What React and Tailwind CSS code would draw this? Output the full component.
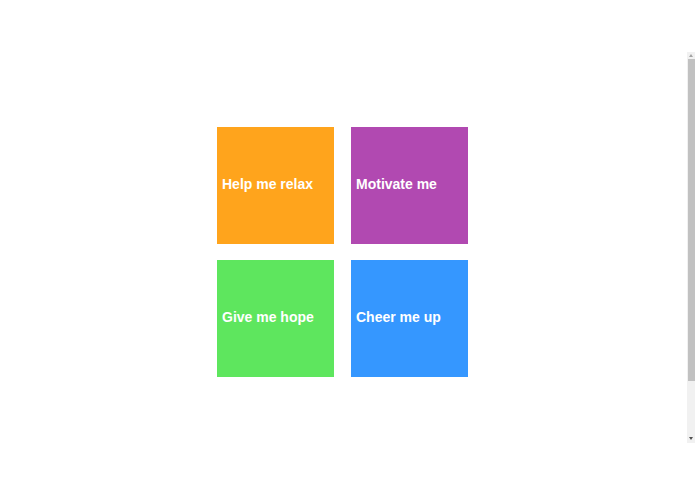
import React from "react"

const tiles = [
  { label: "Help me relax", color: "bg-[#ffa41c]" },
  { label: "Motivate me", color: "bg-[#b149b1]" },
  { label: "Give me hope", color: "bg-[#5ee65e]" },
  { label: "Cheer me up", color: "bg-[#3597ff]" },
]

function Scrollbar() {
  // fake thin scrollbar sitting over the right edge
  return (
    <div className="absolute right-0 top-[52px] h-[391px] w-[8px] bg-[#f1f1f1] flex flex-col items-center">
      <div className="h-[7px] flex items-center justify-center">
        <div className="w-0 h-0 border-l-[2px] border-r-[2px] border-b-[3px] border-l-transparent border-r-transparent border-b-[#a3a3a3]" />
      </div>
      <div className="w-[7px] h-[322px] bg-[#c1c1c1]" />
      <div className="flex-1" />
      <div className="h-[9px] flex items-center justify-center">
        <div className="w-0 h-0 border-l-[2px] border-r-[2px] border-t-[3px] border-l-transparent border-r-transparent border-t-[#505050]" />
      </div>
    </div>
  )
}

export default function App() {
  return (
    <div className="relative w-[695px] h-[494px] bg-white overflow-hidden" style={{ fontFamily: '"Liberation Sans", Arial, sans-serif' }}>
      <div className="pt-[127px] pl-[217px]">
        <div className="grid grid-cols-[117px_117px] gap-x-[17px] gap-y-[16px]">
          {tiles.map((t) => (
            <div key={t.label} className={`${t.color} w-[117px] h-[117px] flex items-center pl-[5px] pb-[4px]`}>
              <span className="text-white font-bold text-[14px] leading-[16px]">{t.label}</span>
            </div>
          ))}
        </div>
      </div>
      <Scrollbar />
    </div>
  )
}
